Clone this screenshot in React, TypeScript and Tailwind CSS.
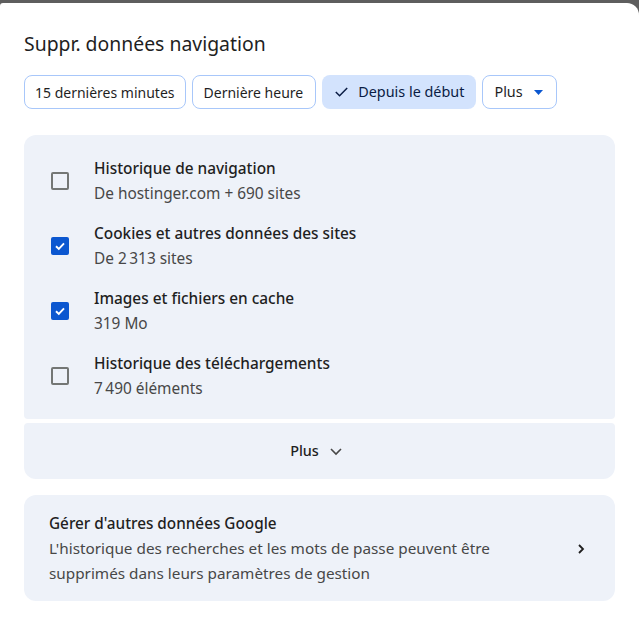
import React from "react";

const font = { fontFamily: "'Noto Sans', sans-serif" };

function Checkbox({ checked }: { checked: boolean }) {
  if (checked) {
    return (
      <div className="w-[18px] h-[18px] rounded-[2px] bg-[#0b57d0] flex items-center justify-center shrink-0">
        <svg width="14" height="14" viewBox="0 0 14 14">
          <path d="M3 7.2 L5.8 9.9 L11 4.4" fill="none" stroke="white" strokeWidth="1.9" />
        </svg>
      </div>
    );
  }
  return <div className="w-[18px] h-[18px] rounded-[2px] border-2 border-[#747775] shrink-0" />;
}

const rows = [
  { title: "Historique de navigation", sub: "De hostinger.com + 690 sites", checked: false },
  { title: "Cookies et autres données des sites", sub: "De 2\u202f313 sites", checked: true },
  { title: "Images et fichiers en cache", sub: "319 Mo", checked: true },
  { title: "Historique des téléchargements", sub: "7\u202f490 éléments", checked: false },
];

export default function App() {
  return (
    <div className="w-[639px] h-[618px] bg-[#5e5e5e] pt-[3px] overflow-hidden" style={font}>
      <div className="h-[615px] bg-white rounded-tr-[12px] rounded-tl-[3px] px-6 pt-[27px] text-[#1f1f1f]">
        <h1 className="text-[19.4px] leading-[28px] font-normal">Suppr. données navigation</h1>
        <div className="flex gap-[6px] mt-[17px]">
          <button className="h-[34px] px-[10px] rounded-[8px] border border-[#a8c7fa] text-[14px] text-[#1f1f1f]">15 dernières minutes</button>
          <button className="h-[34px] pl-[11px] pr-[12px] rounded-[8px] border border-[#a8c7fa] text-[14px] text-[#1f1f1f]">Dernière heure</button>
          <button className="h-[34px] pl-[13px] pr-[12px] rounded-[8px] bg-[#d3e3fd] text-[14px] text-[#0a1c44] flex items-center gap-[10px]">
            <svg width="13" height="10" viewBox="0 0 13 10">
              <path d="M0.8 5 L4.6 8.8 L12.2 1" fill="none" stroke="#0a1c44" strokeWidth="1.5" />
            </svg>
            <span className="text-[14.4px]">Depuis le début</span>
          </button>
          <button className="h-[34px] pl-[11px] pr-[13px] rounded-[8px] border border-[#a8c7fa] text-[14.4px] text-[#1f1f1f] flex items-center gap-[11px]">
            Plus
            <svg width="9" height="5" viewBox="0 0 9 5">
              <path d="M0 0 L4.5 5 L9 0 Z" fill="#0b57d0" />
            </svg>
          </button>
        </div>

        <div className="mt-[26px] bg-[#eef2f9] rounded-t-[12px] rounded-b-[4px] pt-[13px] pb-[11px]">
          {rows.map((r, i) => (
            <div key={i} className="flex items-center h-[65px]">
              <div className="w-[70px] flex justify-center pl-[2px]">
                <Checkbox checked={r.checked} />
              </div>
              <div>
                <div className="text-[15.4px] leading-[25px] font-medium">{r.title}</div>
                <div className="text-[15.4px] leading-[25px] text-[#474747]">{r.sub}</div>
              </div>
            </div>
          ))}
        </div>
        <div className="mt-[4px] h-[56px] bg-[#eef2f9] rounded-t-[4px] rounded-b-[12px] flex items-center justify-center gap-[10px] pr-[6px]">
          <span className="text-[14.4px] font-medium">Plus</span>
          <svg width="14" height="14" viewBox="0 0 14 14">
            <path d="M2 5 L7 10 L12 5" fill="none" stroke="#474747" strokeWidth="1.6" />
          </svg>
        </div>

        <div className="mt-[16px] bg-[#eef2f9] rounded-[12px] pl-[25px] pr-[28px] pt-[16px] pb-[15px] flex items-center">
          <div className="flex-1">
            <div className="text-[15.3px] leading-[25px] font-medium">Gérer d'autres données Google</div>
            <div className="text-[15.3px] leading-[25px] text-[#474747] w-[480px]">
              L'historique des recherches et les mots de passe peuvent être supprimés dans leurs paramètres de gestion
            </div>
          </div>
          <svg width="12" height="12" viewBox="0 0 12 12">
            <path d="M4 2 L8 6 L4 10" fill="none" stroke="#1f1f1f" strokeWidth="1.8" />
          </svg>
        </div>
      </div>
    </div>
  );
}
